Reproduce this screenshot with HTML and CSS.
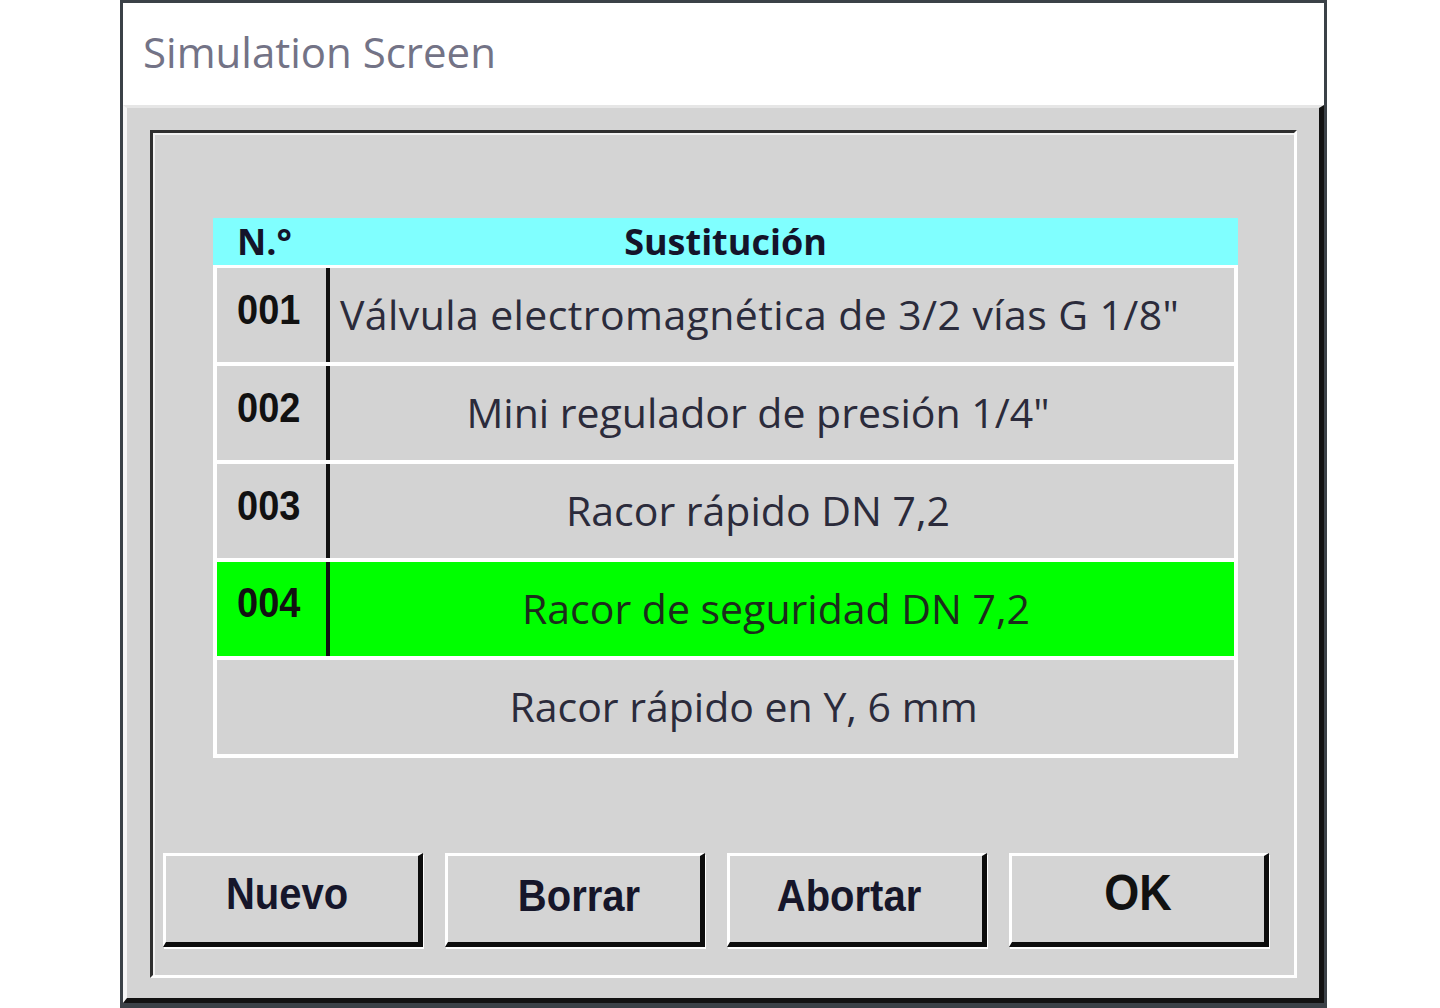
FILE: index.html
```html
<!DOCTYPE html>
<html lang="es">
<head>
<meta charset="utf-8">
<title>Simulation Screen</title>
<link rel="stylesheet" href="styles.css">
</head>
<body>
<div class="window">
  <div class="titlebar">Simulation Screen</div>
  <div class="body">
    <div class="frame">
      <div class="table">
        <div class="thead">
          <div class="th-num">N.°</div>
          <div class="th-desc">Sustitución</div>
        </div>
        <div class="tbody">
          <div class="row">
            <div class="num"><span class="tall">001</span></div>
            <div class="desc desc-left">Válvula electromagnética de 3/2 vías G 1/8"</div>
          </div>
          <div class="row">
            <div class="num"><span class="tall">002</span></div>
            <div class="desc">Mini regulador de presión 1/4"</div>
          </div>
          <div class="row">
            <div class="num"><span class="tall">003</span></div>
            <div class="desc">Racor rápido DN 7,2</div>
          </div>
          <div class="row row-active">
            <div class="num"><span class="tall">004</span></div>
            <div class="desc">Racor de seguridad DN 7,2</div>
          </div>
          <div class="row">
            <div class="desc desc-full">Racor rápido en Y, 6 mm</div>
          </div>
        </div>
      </div>
      <div class="buttons">
        <div class="btn btn-nuevo"><span class="tall">Nuevo</span></div>
        <div class="btn btn-borrar"><span class="tall">Borrar</span></div>
        <div class="btn btn-abortar"><span class="tall">Abortar</span></div>
        <div class="btn btn-ok"><span class="tall">OK</span></div>
      </div>
    </div>
  </div>
</div>
</body>
</html>
```
FILE: styles.css
```css
* { box-sizing: border-box; }
html, body {
  margin: 0;
  padding: 0;
  background: #ffffff;
  width: 1440px;
  height: 1008px;
  overflow: hidden;
}
.window {
  margin-left: 120px;
  width: 1207px;
  height: 1008px;
  border: 3px solid #3b4147;
  border-bottom-width: 5px;
  display: flex;
  flex-direction: column;
}
.titlebar {
  height: 102px;
  background: #ffffff;
  padding-left: 20px;
  padding-bottom: 6px;
  display: flex;
  align-items: center;
  font-family: "Open Sans", sans-serif;
  font-size: 42px;
  color: #737386;
  white-space: nowrap;
}
.body {
  flex: 1;
  display: flex;
  background: #d4d4d4;
  border-top: 3px solid #e6e6e6;
  border-left: 4px solid #f6f6f6;
  border-right: 5px solid #121212;
  border-bottom: 5px solid #121212;
  padding: 22px 22px 20px 23px;
}
.frame {
  flex: 1;
  display: flex;
  flex-direction: column;
  border-top: 3px solid #2f2f2f;
  border-left: 3px solid #2f2f2f;
  border-right: 3px solid #ffffff;
  border-bottom: 3px solid #ffffff;
  box-shadow: inset 2px 2px 0 #f2f2f2;
}
.table {
  margin: 85px 56px 0 60px;
}
.thead {
  height: 47px;
  background: #80ffff;
  display: flex;
  align-items: center;
  font-family: "Open Sans", sans-serif;
  font-weight: 700;
  font-size: 36px;
  color: #14142a;
}
.th-num {
  width: 108px;
  padding-left: 24px;
}
.th-desc {
  flex: 1;
  text-align: center;
  padding-right: 108px;
}
.tbody {
  background: #ffffff;
  padding: 3px 4px 4px 4px;
  display: flex;
  flex-direction: column;
  gap: 4px;
}
.row {
  height: 94px;
  display: flex;
  background: #d3d3d3;
}
.row-active {
  background: #00ff00;
}
.tall {
  display: inline-block;
  transform: scaleY(1.12);
}
.num {
  width: 113px;
  padding-left: 20px;
  padding-top: 20px;
  border-right: 4px solid #111111;
  font-family: "Liberation Sans", Arial, sans-serif;
  font-weight: 700;
  font-size: 38px;
  color: #111111;
}
.desc {
  flex: 1;
  display: flex;
  align-items: center;
  justify-content: center;
  padding-right: 48px;
  padding-bottom: 2px;
  font-family: "Open Sans", sans-serif;
  font-size: 41px;
  color: #2b2b3b;
  white-space: nowrap;
}
.row-active .desc {
  color: #1c2c1c;
  padding-right: 12px;
}
.desc-left {
  justify-content: flex-start;
  padding-left: 10px;
  padding-right: 0;
  letter-spacing: 0.4px;
}
.desc-full {
  padding-left: 36px;
  padding-right: 0;
}
.buttons {
  margin-top: auto;
  margin-bottom: 28px;
  padding-left: 10px;
  display: flex;
  gap: 22px;
}
.btn {
  width: 260px;
  height: 94px;
  background: #d4d4d4;
  border-top: 3px solid #ffffff;
  border-left: 3px solid #ffffff;
  border-right: 5px solid #0d0d0d;
  border-bottom: 5px solid #0d0d0d;
  box-shadow: 1px 2px 0 #ffffff;
  display: flex;
  align-items: center;
  justify-content: center;
  padding-bottom: 12px;
  font-family: "Liberation Sans", Arial, sans-serif;
  font-weight: 700;
  font-size: 40px;
  color: #16162a;
}
.btn-nuevo {
  padding-right: 10px;
}
.btn-borrar {
  padding-left: 10px;
  padding-bottom: 8px;
}
.btn-abortar {
  padding-right: 14px;
  padding-bottom: 8px;
}
.btn-ok {
  font-size: 45px;
  color: #111111;
}
```
